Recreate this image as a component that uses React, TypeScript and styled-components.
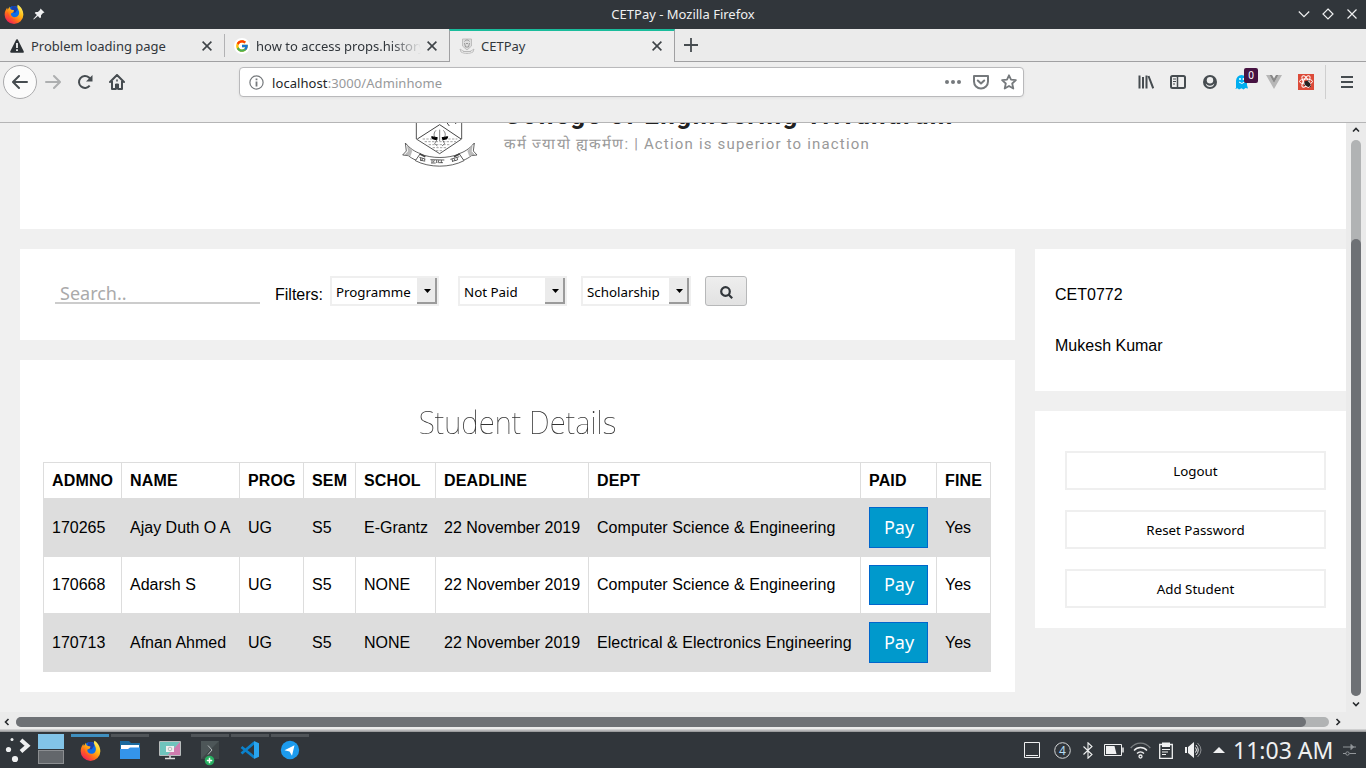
import React from "react";
import styled, { createGlobalStyle } from "styled-components";
import { FcGoogle } from "react-icons/fc";

const ui = `"Noto Sans", sans-serif`;
const arial = `"Liberation Sans", Arial, sans-serif`;

const GlobalStyle = createGlobalStyle`
  * { box-sizing: border-box; }
  body { margin: 0; overflow: hidden; background: #f0f0f0; }
  svg { display: block; flex: none; }
`;

const Desktop = styled.div`
  width: 1366px;
  height: 768px;
  display: flex;
  flex-direction: column;
  overflow: hidden;
`;

/* window title bar */
const TitleBar = styled.header`
  height: 29px;
  flex: none;
  display: grid;
  grid-template-columns: 200px 1fr 200px;
  align-items: center;
  background: #31363b;
  color: #eff0f1;
  font: 13px/28px ${ui};
`;
const TitleLeft = styled.div`
  display: flex;
  align-items: center;
  gap: 9px;
  padding: 0 0 1px 4px;
`;
const TitleText = styled.div`
  height: 29px;
  text-align: center;
`;
const WindowButtons = styled.div`
  display: flex;
  justify-content: flex-end;
  gap: 8px;
  padding: 0 6px 1px 0;
`;

/* tabs */
const TabBar = styled.div`
  height: 33px;
  flex: none;
  display: flex;
  background: #ebebeb;
`;
const Tab = styled.div<{ $active?: boolean; $width: number }>`
  width: ${(p) => p.$width}px;
  height: 33px;
  display: flex;
  align-items: center;
  padding: ${(p) => (p.$active ? "0 12px 2px 9px" : "2px 12px 0 9px")};
  font: 13px/18px ${ui};
  color: #31363b;
  background: ${(p) => (p.$active ? "#eeeeee" : "transparent")};
  border: 0 solid #a0a0a2;
  border-width: ${(p) => (p.$active ? "0 1px" : "0 0 1px")};
  border-top: ${(p) => (p.$active ? "2px solid #1abc9c" : "0")};
`;
const TabDivider = styled.div`
  width: 1px;
  height: 33px;
  padding: 5px 0 4px;
  border-bottom: 1px solid #a0a0a2;
  background: #b2b2b4 content-box;
`;
const TabIcon = styled.span`
  width: 16px;
  margin-right: 6px;
  display: flex;
  justify-content: center;
`;
const TabLabel = styled.span<{ $fade?: boolean }>`
  flex: 1;
  min-width: 0;
  overflow: hidden;
  white-space: nowrap;
  ${(p) => p.$fade && "mask-image: linear-gradient(to right, #000 82%, transparent 100%);"}
`;
const TabRest = styled.div`
  flex: 1;
  padding: 9px 0 0 9px;
  border-bottom: 1px solid #a0a0a2;
`;

/* navigation toolbar */
const NavBar = styled.div`
  height: 61px;
  flex: none;
  display: flex;
  align-items: flex-start;
  padding: 3px 0 0 3px;
  background: #eeeeee;
  border-bottom: 1px solid #b5b5b6;
`;
const NavSlot = styled.div`
  position: relative;
  width: 32px;
  height: 34px;
  display: flex;
  align-items: center;
  justify-content: center;
`;
const BackButton = styled(NavSlot)`
  width: 34px;
  border: 1px solid #aaaaac;
  border-radius: 50%;
  background: #fbfbfb;
`;
const UrlBar = styled.div`
  width: 785px;
  height: 30px;
  margin: 2px 106px 0;
  padding: 0 6px 0 9px;
  display: flex;
  align-items: center;
  background: #fff;
  border: 1px solid #b9b9bb;
  border-radius: 4px;
  box-shadow: 0 1px 3px rgba(0, 0, 0, 0.06);
`;
const UrlText = styled.div`
  flex: 1;
  padding: 2px 0 0 8px;
  font: 13px/20px ${ui};
  letter-spacing: 0.08px;
  color: #97999b;
`;
const UrlHost = styled.span`
  color: #232629;
`;
const UrlActions = styled.div`
  display: flex;
  align-items: center;
  gap: 12px;
`;
const Badge = styled.span`
  position: absolute;
  left: 18px;
  top: 3px;
  width: 14px;
  height: 15px;
  border-radius: 2px;
  background: #471342;
  color: #fff;
  text-align: center;
  font: 10px/15px ${ui};
`;
const NavDivider = styled.div`
  width: 1px;
  height: 34px;
  margin: 0 5px 0 3px;
  background: #cfcfcf;
`;

/* page viewport with its scroll bars */
const BrowserBody = styled.div`
  height: 609px;
  flex: none;
  display: grid;
  grid-template-columns: 1346px 20px;
  grid-template-rows: 589px 17px 3px;
  background: #ebebeb;
`;
const Page = styled.main`
  overflow: hidden;
  padding-left: 20px;
  background: #f0f0f0;
  font: 16px/18px ${arial};
  color: #000;
`;
const VScroll = styled.div`
  display: flex;
  flex-direction: column;
  align-items: center;
`;
const VTrack = styled.div`
  width: 10px;
  height: 556px;
  padding-top: 99px;
  border-radius: 5px;
  background: #b1b3b4;
`;
const VThumb = styled.div`
  height: 457px;
  border-radius: 5px;
  background: #6e7175;
`;
const VArrow = styled.div`
  height: 17px;
  display: flex;
  align-items: center;
  &:first-child { height: 15px; margin-bottom: 2px; }
`;
const HScroll = styled.div`
  display: flex;
  align-items: center;
  padding: 2px 0 0 3px;
`;
const HTrack = styled.div`
  width: 1313px;
  height: 10px;
  margin: 0 5px;
  border-radius: 5px;
  background: #b1b3b4;
`;
const HThumb = styled.div`
  width: 1290px;
  height: 10px;
  border-radius: 5px;
  background: #6e7175;
`;
const WindowEdge = styled.div`
  grid-row: 3;
  grid-column: 1 / 3;
  background: linear-gradient(#dcdcdc, #8f9092);
`;

const Banner = styled.section`
  height: 106px;
  display: flex;
  padding-left: 370px;
  overflow: hidden;
  background: #fff;
`;
const BannerText = styled.div`
  margin: -24px 0 0 14px;
  font-family: Roboto, sans-serif;
  white-space: nowrap;
`;
const CollegeName = styled.h1`
  margin: 0;
  font-size: 26px;
  line-height: 32px;
  font-weight: 700;
  letter-spacing: 1.36px;
  color: #212121;
`;
const Motto = styled.p`
  margin: 3px 0 0;
  font-size: 15px;
  line-height: 20px;
  letter-spacing: 1.18px;
  color: #999;
`;
const Columns = styled.div`
  display: flex;
  gap: 20px;
  padding-top: 20px;
`;
const MainColumn = styled.div`
  width: 995px;
  display: flex;
  flex-direction: column;
  gap: 20px;
`;
const SideColumn = styled.aside`
  width: 311px;
  display: flex;
  flex-direction: column;
  gap: 20px;
`;
const FilterPanel = styled.section`
  height: 91px;
  padding: 27px 35px;
  display: flex;
  align-items: flex-start;
  background: #fff;
`;
const SearchInput = styled.input`
  width: 205px;
  height: 24px;
  margin-top: 4px;
  padding: 4px 5px 0;
  border: 0;
  border-bottom: 2px solid #ccc;
  outline: 0;
  background: transparent;
  font: 18px/18px ${ui};
  &::placeholder { color: #aaa; opacity: 1; }
`;
const FilterLabel = styled.span`
  width: 55px;
  margin: 10px 0 0 15px;
`;
const SelectBox = styled.div<{ $width: number; $gap: number }>`
  width: ${(p) => p.$width}px;
  height: 30px;
  margin-right: ${(p) => p.$gap}px;
  padding-left: 4px;
  display: flex;
  justify-content: space-between;
  border: 2px solid #efefef;
  font: 13.33px/28px ${ui};
`;
const SelectArrow = styled.span`
  width: 20px;
  display: flex;
  align-items: center;
  justify-content: center;
  padding: 2px 0 0 2px;
  background: #ebebeb;
  border: solid #9b9b9b;
  border-width: 0 2px 2px 0;
`;
const SearchButton = styled.button`
  width: 42px;
  height: 30px;
  padding: 2px 0 0;
  display: flex;
  align-items: center;
  justify-content: center;
  border: 1px solid #b7b8b9;
  border-radius: 3px;
  background: linear-gradient(#eeeeee, #e2e2e2);
`;
const StudentPanel = styled.section`
  height: 332px;
  padding: 36px 23px 0;
  background: #fff;
`;
const PanelTitle = styled.h2`
  margin: 0 0 14px;
  text-align: center;
  transform: scaleX(0.93);
  font: 100 32px/52px "Noto Sans", sans-serif;
  color: #333;
`;
const StudentTable = styled.table`
  width: 947px;
  table-layout: fixed;
  border-collapse: collapse;
  white-space: nowrap;
`;
const HeadCell = styled.th`
  height: 36px;
  padding: 0 8px;
  text-align: left;
  font-weight: 700;
  letter-spacing: 0.15px;
  border: 1px solid #ddd;
`;
const Cell = styled.td`
  padding: 0 8px;
  border: 1px solid #ddd;
  &:nth-child(7) { letter-spacing: 0.06px; }
`;
const StudentRow = styled.tr<{ $shaded: boolean }>`
  height: ${(p) => (p.$shaded ? 58 : 57)}px;
  background: ${(p) => (p.$shaded ? "#ddd" : "#fff")};
`;
const PayButton = styled.button<{ $tall: boolean }>`
  display: block;
  width: 59px;
  height: ${(p) => (p.$tall ? 41 : 40)}px;
  padding: 0 0 2px 1px;
  border: 1px solid #0066cc;
  background: #0099cc;
  color: #fff;
  font: 18px/36px ${ui};
`;
const ProfilePanel = styled.section`
  height: 142px;
  padding: 37px 20px;
  display: flex;
  flex-direction: column;
  gap: 33px;
  background: #fff;
`;
const ActionPanel = styled.section`
  height: 217px;
  padding: 40px 20px 20px 30px;
  display: flex;
  flex-direction: column;
  gap: 20px;
  background: #fff;
`;
const ActionButton = styled.button`
  height: 39px;
  padding: 0;
  border: 2px solid #efefef;
  background: #fff;
  color: #000;
  font: 13.33px/20px ${ui};
`;

/* desktop panel */
const Taskbar = styled.footer`
  height: 36px;
  flex: none;
  display: flex;
  background: #31363b;
  color: #eff0f1;
`;
const Launcher = styled.div`
  width: 38px;
  padding: 4px 0 0 5px;
`;
const Pager = styled.div`
  width: 26px;
  margin: 2px 6px 0 0;
  display: flex;
  flex-direction: column;
  gap: 1px;
`;
const PagerDesk = styled.div<{ $current?: boolean }>`
  height: ${(p) => (p.$current ? 15 : 14)}px;
  background: ${(p) => (p.$current ? "#82c4e8" : "#63676b")};
  border: 1px solid ${(p) => (p.$current ? "#82c4e8" : "#8b8e91")};
`;
const Task = styled.div<{ $bar: string }>`
  width: 38px;
  height: 34px;
  margin: 2px 1px 0;
  display: flex;
  justify-content: center;
  padding-top: 3px;
  border-top: 3px solid ${(p) => p.$bar};
`;
const Tray = styled.div`
  margin-left: auto;
  display: flex;
  align-items: center;
`;
const TrayIcon = styled.div<{ $width?: number }>`
  width: ${(p) => p.$width ?? 26}px;
  display: flex;
  justify-content: center;
`;
const Clock = styled.time`
  width: 100px;
  padding-left: 1px;
  white-space: nowrap;
  font: 23px/36px ${ui};
`;

const Firefox = ({ size, id }: { size: number; id: string }) => (
  <svg width={size} height={size} viewBox="0 0 32 32">
    <defs>
      <linearGradient id={id} x1="0.85" y1="0.05" x2="0.2" y2="0.95">
        <stop offset="0" stopColor="#fff36b" />
        <stop offset="0.35" stopColor="#ffbd17" />
        <stop offset="0.65" stopColor="#ff7616" />
        <stop offset="1" stopColor="#f0165d" />
      </linearGradient>
    </defs>
    <circle cx="16" cy="14" r="11" fill="#0b6fe8" />
    <path d="M12 4c4-2 9 0 10 4l-4 6h-7z" fill="#1a3fa8" />
    <path
      d="M22 1c5 3 9 9 9 16a15 15 0 0 1-30 0C1 12 3 9 5 6l1 3 3-5c0 3 1 4 3 5l4 1-1 3-4 2c0 4 3 6 6 6 5 0 8-4 7-9-1-4-4-7-2-11z"
      fill={`url(#${id})`}
    />
    <path d="M6 12c1 8 6 13 13 12-8 4-16-2-13-12z" fill="#ff4534" opacity=".7" />
  </svg>
);

const Close = () => (
  <svg width="10" height="10" viewBox="0 0 10 10" stroke="#3f4448" strokeWidth="1.6">
    <path d="M.6.6l8.800 8.800M9.400.6L.6 9.400" />
  </svg>
);

const MiniCrest = () => (
  <svg width="16" height="16" viewBox="0 0 16 16" fill="none" stroke="#b4b4b4" strokeWidth=".8">
    <path d="M3.500 1h9v7L8 12 3.500 8z" fill="#dedede" />
    <path d="M5.500 3.500c1-2 4-2 5 0M5.500 5l1 4h3l1-4M7 5.500h2" stroke="#888" />
    <path d="M1 11l1 3c4 2 8 2 12 0l1-3-3 2c-2 1-6 1-8 0zM4 13.500h8" />
  </svg>
);

const Crest = () => (
  <svg width="100" height="52" viewBox="0 24 300 156" fill="none" stroke="#444" strokeWidth="3">
    <path d="M79 20v52l70 44 66-44V20" stroke="#555" />
    <path d="M149 29L82 72M149 29l64 43M167 18l11 15M196 24l2 3" />
    <path
      d="M98 72h36M164 72h38M104 80h94M116 89h66M128 98h44M138 107h22"
      strokeDasharray="7 4"
      strokeWidth="2"
      stroke="#777"
    />
    <path d="M138 46c-10 10-6 22 4 26l-8 14 8 7M160 46c10 10 6 22-4 26l8 14-8 7M149 44v34" strokeWidth="2" />
    <path d="M125 65l17 3-3 6-12-3zM173 65l-17 3 3 6 12-3z" fill="#000" stroke="#000" />
    <path d="M46 84c14 17 30 27 46 32l-13 20c-10-4-18-9-24-14l-17-2 11-12z" fill="#fff" strokeWidth="2.500" />
    <path d="M253 84c-14 17-30 27-46 32l13 20c10-4 18-9 24-14l17-2-11-12z" fill="#fff" strokeWidth="2.500" />
    <path d="M52 94l14 13-5 15-16-3 10-10zM247 94l-14 13 5 15 16-3-10-10z" fill="#bbb" stroke="#999" strokeWidth="1" />
    <path d="M90 117c38 14 82 14 118 0l14 20c-42 22-104 22-146 0z" fill="#fff" strokeWidth="2.500" />
    <path d="M90 117l16 8M208 117l-16 8" strokeWidth="5" />
    <path
      d="M88 127l18 5m-14-4v9m6-7l-3 8m9-6v8M121 134l42 1m-37 0v8m7-8l-3 7m10-7v9m7-9l-3 8m10-8v9M181 133l27-8m-22 7l2 8m4-10l4 8m5-11l2 8M90 135l12 3M123 144h14m8-1h14M186 139l16-4"
      strokeWidth="2.500"
    />
  </svg>
);

const Arrow = ({ d }: { d: string }) => (
  <svg width="8" height="8" viewBox="0 0 8 8" fill="none" stroke="#26292c" strokeWidth="1.6">
    <path d={d} />
  </svg>
);

const students = [
  ["170265", "Ajay Duth O A", "UG", "S5", "E-Grantz", "22 November 2019", "Computer Science & Engineering"],
  ["170668", "Adarsh S", "UG", "S5", "NONE", "22 November 2019", "Computer Science & Engineering"],
  ["170713", "Afnan Ahmed", "UG", "S5", "NONE", "22 November 2019", "Electrical & Electronics Engineering"],
];
const headings = ["ADMNO", "NAME", "PROG", "SEM", "SCHOL", "DEADLINE", "DEPT", "PAID", "FINE"];
const widths = [78, 118, 64, 52, 80, 153, 272, 76, 54];

const Select = ({ label, width, gap }: { label: string; width: number; gap: number }) => (
  <SelectBox $width={width} $gap={gap}>
    {label}
    <SelectArrow>
      <svg width="7" height="4" viewBox="0 0 7 4">
        <path d="M0 0h7L3.500 4z" />
      </svg>
    </SelectArrow>
  </SelectBox>
);

const ink = "#464c50";

export default function App() {
  return (
    <Desktop>
      <GlobalStyle />
      <TitleBar>
        <TitleLeft>
          <Firefox size={20} id="ffTitle" />
          <svg width="12" height="12" viewBox="0 0 12 12" fill="#eff0f1">
            <path d="M7.500.5l4 4-1.500.5-2 2.200v2L7 10.200 4.900 8 .8 11.500l-.5-.5L3.900 7 1.700 5l1-1h2.200L7 2z" />
          </svg>
        </TitleLeft>
        <TitleText>CETPay - Mozilla Firefox</TitleText>
        <WindowButtons>
          <svg width="16" height="16" viewBox="0 0 16 16" fill="none" stroke="#eff0f1" strokeWidth="1.200">
            <path d="M2.800 5.500L8 10.700l5.200-5.200" />
          </svg>
          <svg width="16" height="16" viewBox="0 0 16 16" fill="none" stroke="#eff0f1" strokeWidth="1.200">
            <path d="M8 3l5 5-5 5-5-5z" />
          </svg>
          <svg width="16" height="16" viewBox="0 0 16 16" fill="none" stroke="#eff0f1" strokeWidth="1.200">
            <path d="M3.500 3.500l9 9M12.500 3.500l-9 9" />
          </svg>
        </WindowButtons>
      </TitleBar>

      <TabBar>
        <Tab $width={224}>
          <TabIcon>
            <svg width="14" height="14" viewBox="0 0 14 14">
              <path d="M7 1.200L12.800 12.800H1.200z" fill="#2d3236" stroke="#2d3236" strokeWidth="2" strokeLinejoin="round" />
              <path d="M7 4v5M7 10.300v1.700" stroke="#fff" strokeWidth="1.700" />
            </svg>
          </TabIcon>
          <TabLabel>Problem loading page</TabLabel>
          <Close />
        </Tab>
        <TabDivider />
        <Tab $width={224}>
          <TabIcon>
            <svg width="16" height="16" viewBox="0 0 16 16">
              <circle cx="8" cy="8" r="8" fill="#fff" />
              <FcGoogle x="1" y="1" size={14} />
            </svg>
          </TabIcon>
          <TabLabel $fade>how to access props.history</TabLabel>
          <svg width="6" height="1" />
          <Close />
        </Tab>
        <Tab $width={226} $active>
          <TabIcon>
            <MiniCrest />
          </TabIcon>
          <TabLabel>CETPay</TabLabel>
          <Close />
        </Tab>
        <TabRest>
          <svg width="14" height="14" viewBox="0 0 14 14" stroke={ink} strokeWidth="1.800">
            <path d="M7 0v14M0 7h14" />
          </svg>
        </TabRest>
      </TabBar>

      <NavBar>
        <BackButton>
          <svg width="16" height="16" viewBox="0 0 16 16" fill="none" stroke={ink} strokeWidth="2" strokeLinecap="round" strokeLinejoin="round">
            <path d="M15 8H1.500M7 2L1 8l6 6" />
          </svg>
        </BackButton>
        <NavSlot>
          <svg width="16" height="16" viewBox="0 0 16 16" fill="none" stroke="#adafb0" strokeWidth="2" strokeLinecap="round" strokeLinejoin="round">
            <path d="M1 8h13.500M9 2l6 6-6 6" />
          </svg>
        </NavSlot>
        <NavSlot>
          <svg width="16" height="16" viewBox="0 0 16 16" fill="none" stroke={ink} strokeWidth="2">
            <path d="M12.700 11.700A6 6 0 1 1 12 3.500L14 5.500" />
            <path d="M15.500 1v6.500H9z" fill={ink} stroke="none" />
          </svg>
        </NavSlot>
        <NavSlot>
          <svg width="16" height="16" viewBox="0 0 16 16" fill="none" stroke={ink} strokeWidth="2" strokeLinejoin="round">
            <path d="M1 8l7-7 7 7M3 7v8h3.500M13 7v8H9.500" strokeLinecap="round" />
            <path d="M6.500 15v-5h3v5z" fill={ink} strokeWidth="1" />
            <path d="M8 5.500v2" strokeWidth="1.500" />
          </svg>
        </NavSlot>
        <UrlBar>
          <svg width="15" height="15" viewBox="0 0 15 15" fill="none" stroke="#75797c">
            <circle cx="7.500" cy="7.500" r="6.600" strokeWidth="1.200" />
            <path d="M7.500 6.500V11.500M7.500 3.500v1.800" strokeWidth="1.800" />
          </svg>
          <UrlText>
            <UrlHost>localhost</UrlHost>:3000/Adminhome
          </UrlText>
          <UrlActions>
            <svg width="16" height="16" viewBox="0 0 16 16" fill="#75797c">
              <circle cx="2" cy="8" r="2" />
              <circle cx="8" cy="8" r="2" />
              <circle cx="14" cy="8" r="2" />
            </svg>
            <svg width="16" height="16" viewBox="0 0 16 16" fill="none" stroke="#75797c" strokeWidth="2" strokeLinecap="round" strokeLinejoin="round">
              <path d="M1 2h14v5.500a7 7 0 0 1-14 0z" />
              <path d="M4.800 6.500L8 9.500l3.200-3" />
            </svg>
            <svg width="16" height="16" viewBox="0 0 16 16" fill="none" stroke="#75797c" strokeWidth="1.800" strokeLinejoin="round">
              <path d="M8 1.300l2 4.400 4.900.5-3.700 3.300 1.100 5L8 12l-4.300 2.500 1.100-5L1.100 6.200 6 5.700z" />
            </svg>
          </UrlActions>
        </UrlBar>
        <NavSlot>
          <svg width="16" height="16" viewBox="0 0 16 16" fill="none" stroke={ink} strokeWidth="2">
            <path d="M1.500 1.500v13M5 3v11.500M8.500 1.500v13M10.500 2l4.700 12.300" />
          </svg>
        </NavSlot>
        <NavSlot>
          <svg width="16" height="16" viewBox="0 0 16 16" fill="none" stroke={ink} strokeWidth="2">
            <rect x="1" y="2" width="14" height="12" rx="1.500" />
            <path d="M7.500 2v12" strokeWidth="1.500" />
            <path d="M3 5h3M3 7.500h3M3 10h2" strokeWidth="1" />
          </svg>
        </NavSlot>
        <NavSlot>
          <svg width="16" height="16" viewBox="0 0 16 16">
            <circle cx="8" cy="8" r="7" fill={ink} />
            <circle cx="8" cy="6.300" r="3.200" fill="#eee" />
            <path d="M3.600 9.500q4.400 4.500 8.800 0q-1 3.500-4.400 3.500t-4.400-3.500z" fill="#eee" />
          </svg>
        </NavSlot>
        <NavSlot>
          <svg width="16" height="16" viewBox="0 0 16 16">
            <path d="M2 14V7a5.500 6 0 0 1 11 0v4l1 3.500-2.500-.5-2 1.500L7.500 14.300 5 15.500 3.500 14.200 1 15z" fill="#00aef0" />
            <circle cx="6" cy="5" r="1" fill="#fff" />
            <circle cx="9.500" cy="5" r="1" fill="#fff" />
            <path d="M5 8q3 3 5.500 0" fill="none" stroke="#fff" />
          </svg>
          <Badge>0</Badge>
        </NavSlot>
        <NavSlot>
          <svg width="16" height="14" viewBox="0 0 16 14">
            <path d="M0 0h3.500L8 8l4.500-8H16L8 14z" fill="#b7b7b7" />
            <path d="M3.500 0H6l2 3.500L10 0h2.500L8 8z" fill="#888" />
          </svg>
        </NavSlot>
        <NavSlot>
          <svg width="16" height="16" viewBox="0 0 16 16" fill="none" stroke="#fff">
            <rect width="16" height="16" fill="#dc4a38" stroke="none" />
            <ellipse cx="8" cy="7.500" rx="6.500" ry="2.500" />
            <ellipse cx="8" cy="7.500" rx="6.500" ry="2.500" transform="rotate(60 8 7.500)" />
            <ellipse cx="8" cy="7.500" rx="6.500" ry="2.500" transform="rotate(120 8 7.500)" />
            <ellipse cx="9.500" cy="10" rx="3.300" ry="2.300" transform="rotate(40 9.500 10)" fill="#222" stroke="none" />
            <path d="M6.500 8l5-1.500M7 12l-1-1.500M11.500 13.500l1.500-1.500" stroke="#222" strokeWidth=".8" />
          </svg>
        </NavSlot>
        <NavDivider />
        <NavSlot>
          <svg width="12" height="12" viewBox="0 0 12 12" stroke={ink} strokeWidth="2">
            <path d="M0 1h12M0 6h12M0 11h12" />
          </svg>
        </NavSlot>
      </NavBar>

      <BrowserBody>
        <Page>
          <Banner>
            <Crest />
            <BannerText>
              <CollegeName>College of Engineering Trivandrum</CollegeName>
              <Motto>कर्म ज्यायो ह्यकर्मण: | Action is superior to inaction</Motto>
            </BannerText>
          </Banner>
          <Columns>
            <MainColumn>
              <FilterPanel>
                <SearchInput placeholder="Search.." />
                <FilterLabel>Filters:</FilterLabel>
                <Select label="Programme" width={109} gap={19} />
                <Select label="Not Paid" width={109} gap={14} />
                <Select label="Scholarship" width={110} gap={14} />
                <SearchButton aria-label="Search">
                  <svg width="13" height="13" viewBox="0 0 13 13" fill="none" stroke="#31363b" strokeWidth="2.200">
                    <circle cx="5.500" cy="5.500" r="4.300" />
                    <path d="M8.500 8.500l3.700 3.700" />
                  </svg>
                </SearchButton>
              </FilterPanel>
              <StudentPanel>
                <PanelTitle>Student Details</PanelTitle>
                <StudentTable>
                  <colgroup>
                    {widths.map((w, i) => (
                      <col key={i} width={w} />
                    ))}
                  </colgroup>
                  <thead>
                    <tr>
                      {headings.map((h) => (
                        <HeadCell key={h}>{h}</HeadCell>
                      ))}
                    </tr>
                  </thead>
                  <tbody>
                    {students.map((row, i) => (
                      <StudentRow key={row[0]} $shaded={i % 2 === 0}>
                        {row.map((value, c) => (
                          <Cell key={c}>{value}</Cell>
                        ))}
                        <Cell>
                          <PayButton $tall={i % 2 === 0}>Pay</PayButton>
                        </Cell>
                        <Cell>Yes</Cell>
                      </StudentRow>
                    ))}
                  </tbody>
                </StudentTable>
              </StudentPanel>
            </MainColumn>
            <SideColumn>
              <ProfilePanel>
                <span>CET0772</span>
                <span>Mukesh Kumar</span>
              </ProfilePanel>
              <ActionPanel>
                <ActionButton>Logout</ActionButton>
                <ActionButton>Reset Password</ActionButton>
                <ActionButton>Add Student</ActionButton>
              </ActionPanel>
            </SideColumn>
          </Columns>
        </Page>
        <VScroll>
          <VArrow>
            <Arrow d="M1 5.500l3-3 3 3" />
          </VArrow>
          <VTrack>
            <VThumb />
          </VTrack>
          <VArrow>
            <Arrow d="M1 2.500l3 3 3-3" />
          </VArrow>
        </VScroll>
        <HScroll>
          <Arrow d="M5.500 1l-3 3 3 3" />
          <HTrack>
            <HThumb />
          </HTrack>
          <Arrow d="M2.500 1l3 3-3 3" />
        </HScroll>
        <WindowEdge />
      </BrowserBody>

      <Taskbar>
        <Launcher>
          <svg width="26" height="28" viewBox="0 0 26 28" fill="#eff0f1">
            <circle cx="7" cy="3.500" r="1.500" />
            <circle cx="3.500" cy="13.500" r="2.600" />
            <circle cx="10" cy="23" r="3.100" />
            <path d="M16 4l6.500 5.700-6.500 5.700" fill="none" stroke="#eff0f1" strokeWidth="4" />
          </svg>
        </Launcher>
        <Pager>
          <PagerDesk $current />
          <PagerDesk />
        </Pager>
        <Task $bar="#3f8fbf">
          <Firefox size={21} id="ffTask" />
        </Task>
        <Task $bar="#4f5458">
          <svg width="20" height="20" viewBox="0 0 20 20">
            <path d="M0 1h9l2 2h9v10H0z" fill="#1b6a9f" />
            <path d="M1 5h18v5H1z" fill="#fff" />
            <path d="M0 9h8l2-1.500h10V19H0z" fill="#3494ea" />
          </svg>
        </Task>
        <Task $bar="transparent">
          <svg width="22" height="20" viewBox="0 0 22 20">
            <rect x="0" y="1" width="22" height="15" rx="1" fill="#b8bdbd" />
            <path d="M1 2h20L9 15H1z" fill="#6fc4bd" />
            <path d="M21 2v13H9z" fill="#cf7bae" />
            <rect x="7" y="6" width="8" height="6" fill="#f1f1f1" />
            <circle cx="11" cy="9" r="1.800" fill="none" stroke="#b9b9b9" />
            <path d="M6 18.500h10M11 16v2" stroke="#ddd" strokeWidth="1.500" />
          </svg>
        </Task>
        <Task $bar="#4f5458">
          <svg width="20" height="26" viewBox="0 0 20 26">
            <rect x="1" y="1" width="18" height="18" fill="#4d5658" />
            <path d="M1 19L19 1v18z" fill="#3f4648" />
            <path d="M8 5.500l4 4.500-4 4.500" fill="none" stroke="#b5babc" />
            <circle cx="9.500" cy="20.500" r="4.800" fill="#27ae60" />
            <path d="M9.500 17.800v5.400M6.800 20.500h5.400" stroke="#fff" strokeWidth="1.500" />
          </svg>
        </Task>
        <Task $bar="#4f5458">
          <svg width="20" height="20" viewBox="0 0 20 20" fill="none">
            <path d="M1.500 7L14.500 17.500M1.500 13.500L14.500 2.500" stroke="#0b82cc" strokeWidth="2.800" />
            <path d="M14 1l5 2.300v13.400L14 19z" fill="#29a5ef" />
          </svg>
        </Task>
        <Task $bar="#4f5458">
          <svg width="20" height="20" viewBox="0 0 20 20">
            <circle cx="10" cy="10" r="9.200" fill="#1d9bed" />
            <path d="M4.500 10.200l10-5-2.500 10.500-2.500-4.200z" fill="#fff" />
          </svg>
        </Task>
        <Tray>
          <TrayIcon $width={30}>
            <svg width="16" height="16" viewBox="0 0 16 16" fill="none" stroke="#eff0f1">
              <path d="M.5.5h15v15H.5zM2 13.500h12" />
            </svg>
          </TrayIcon>
          <TrayIcon $width={30}>
            <svg width="17" height="17" viewBox="0 0 17 17">
              <circle cx="8.500" cy="8.500" r="7.800" fill="none" stroke="#d5d7d8" />
              <text x="8.500" y="12.700" textAnchor="middle" fill="#b5dcf5" fontFamily="Noto Sans" fontSize="12">4</text>
            </svg>
          </TrayIcon>
          <TrayIcon $width={22}>
            <svg width="10" height="17" viewBox="0 0 10 17" fill="none" stroke="#eff0f1" strokeWidth="1.100">
              <path d="M.5 4.500l8.500 8-4 3.700V.8l4 3.700-8.500 8" />
            </svg>
          </TrayIcon>
          <TrayIcon $width={30}>
            <svg width="20" height="12" viewBox="0 0 20 12" fill="none" stroke="#eff0f1">
              <path d="M.5.5h17v11H.5z" />
              <path d="M2 2h8.500l2 8H2z" fill="#eff0f1" stroke="none" />
              <path d="M19 3.500v5" strokeWidth="1.500" />
            </svg>
          </TrayIcon>
          <TrayIcon $width={23}>
            <svg width="21" height="17" viewBox="0 0 21 17" fill="none" strokeWidth="1.300">
              <path d="M.7 6C6-.5 15-.5 20.300 6" stroke="#7b7f82" />
              <path d="M4 8.500c3.500-4 9.500-4 13 0M7 11.500c2-2.300 5-2.300 7 0" stroke="#eff0f1" />
              <circle cx="10.500" cy="14.500" r="1.500" stroke="#eff0f1" />
            </svg>
          </TrayIcon>
          <TrayIcon $width={28}>
            <svg width="14" height="17" viewBox="0 0 14 17" fill="none" stroke="#eff0f1">
              <path d="M.7 2.500h12.600v13.800H.7z" strokeWidth="1.300" />
              <path d="M3 .5h8V5H3z" fill="#eff0f1" stroke="none" />
              <path d="M3 7.500h8M3 10h6M3 12.500h4" />
            </svg>
          </TrayIcon>
          <TrayIcon>
            <svg width="17" height="16" viewBox="0 0 17 16" fill="none" stroke="#eff0f1">
              <path d="M0 5h2v6H0zM3 5l6-5v16l-6-5z" fill="#eff0f1" stroke="none" />
              <path d="M10.500 5.500q2 2.500 0 5M11 3q4.500 5 0 10" />
              <path d="M12.500 1q7 7 0 14" stroke="#8f9295" />
            </svg>
          </TrayIcon>
          <TrayIcon>
            <svg width="12" height="6" viewBox="0 0 12 6" fill="#eff0f1">
              <path d="M0 6l6-6 6 6z" />
            </svg>
          </TrayIcon>
          <Clock>11:03 AM</Clock>
          <TrayIcon $width={34}>
            <svg width="13" height="12" viewBox="0 0 13 12" fill="none" stroke="#92969a">
              <path d="M0 3h13M0 9.500h3M6.500 9.500H13" />
              <path d="M8 0.500v5L10.500 3z" fill="#92969a" />
              <circle cx="4.500" cy="9.500" r="1.700" />
            </svg>
          </TrayIcon>
        </Tray>
      </Taskbar>
    </Desktop>
  );
}
